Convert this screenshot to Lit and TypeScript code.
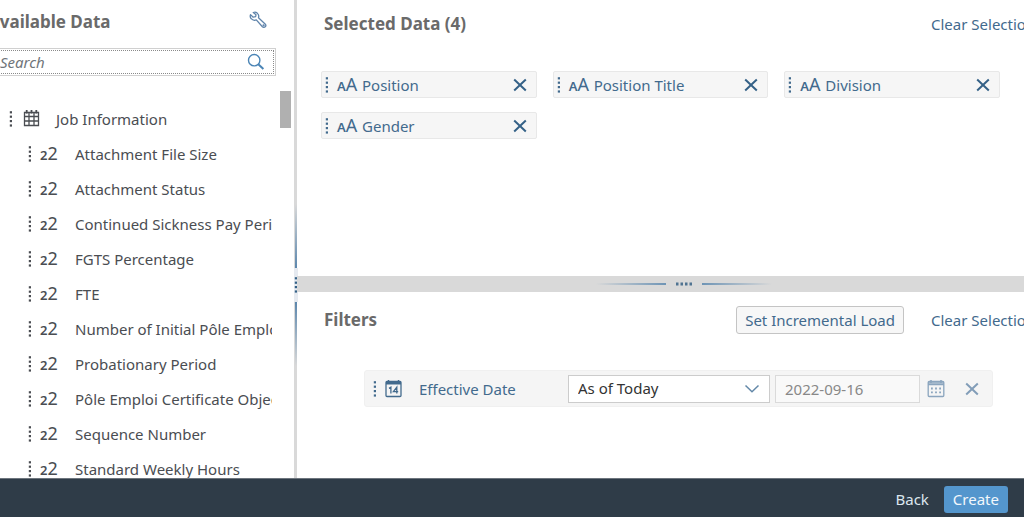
import { LitElement, html, css, svg } from "lit";
import { customElement, state } from "lit/decorators.js";

const FIELDS = [
  "Attachment File Size",
  "Attachment Status",
  "Continued Sickness Pay Period",
  "FGTS Percentage",
  "FTE",
  "Number of Initial Pôle Emploi",
  "Probationary Period",
  "Pôle Emploi Certificate Object",
  "Sequence Number",
  "Standard Weekly Hours",
];

const grip = html`<svg class="grip" width="4" height="16" viewBox="0 0 4 16" aria-hidden="true">
  ${[0, 4.4, 8.8, 13.2].map((y) => svg`<rect x="0.8" y=${y + 0.2} width="2.2" height="2.2" fill="currentColor" />`)}
</svg>`;

const cross = html`<svg width="14" height="14" viewBox="0 0 14 14" aria-hidden="true">
  <path d="M1.2 1.5 12.8 12.5M12.8 1.5 1.2 12.5" fill="none" stroke="currentColor" stroke-width="2" />
</svg>`;

const numberIcon = html`<span class="kind number" aria-hidden="true"><small>2</small>2</span>`;
const textIcon = html`<span class="kind letters" aria-hidden="true"><small>A</small>A</span>`;

@customElement("app-root")
export class AppRoot extends LitElement {
  @state() private selected = ["Position", "Position Title", "Division", "Gender"];

  static styles = css`
    :host {
      display: flex;
      flex-direction: column;
      height: 100vh;
      overflow: hidden;
      background: #fff;
      color: #4a4d52;
      font: 15px/20px "Noto Sans", sans-serif;
    }
    * { box-sizing: border-box; }
    svg { display: block; flex: none; }
    h2 { margin: 0; font-size: 17px; line-height: 24px; font-weight: 700; color: #6a6a6a; white-space: nowrap; }
    button, input, select { font: inherit; color: inherit; margin: 0; }
    button { padding: 0; border: 0; background: none; cursor: pointer; }
    a { color: #426a8d; text-decoration: none; white-space: nowrap; }
    .work { flex: 1; min-height: 0; display: grid; grid-template-columns: 294px 3px minmax(0, 1fr); }

    .available { display: flex; flex-direction: column; min-height: 0; overflow: hidden; padding-right: 3px; }
    .available-head { display: flex; justify-content: space-between; align-items: center; height: 44px; margin-left: -12px; padding-right: 24px; }
    .tool { color: #5f84ab; margin-top: -4px; }
    .search { display: flex; align-items: center; height: 28px; margin: 4px 15px 0 -4px; padding: 0 10px 0 3px; border: 1px solid #d0d0d0; outline: 1px dotted #8a8a8a; outline-offset: -3px; }
    .search input { flex: 1; min-width: 0; border: 0; outline: 0; padding: 0; background: none; }
    .search input::placeholder { color: #70757a; font-style: italic; opacity: 1; }
    .search button { color: #4a84b5; }
    .tree { display: flex; justify-content: space-between; flex: 1; min-height: 0; margin-top: 15px; }
    .list { flex: 1; min-width: 0; margin: 0 8px 0 0; padding: 10px 0 0; list-style: none; overflow: hidden; }
    .list li { display: flex; align-items: center; height: 35px; white-space: nowrap; }
    .folder { padding-left: 9px; }
    .folder svg + svg { margin: 0 16px 0 10px; }
    .field { padding-left: 28px; }
    .kind { flex: none; font-size: 18px; line-height: 20px; white-space: nowrap; }
    .kind small { font-size: 13px; font-weight: 600; }
    .number { width: 19px; margin: 0 16px 0 8px; }
    .letters { width: 21px; margin: 0 4px 0 8px; }
    .thumb { flex: none; width: 11px; height: 37px; background: #b0b0b0; }

    .divider { display: flex; flex-direction: column; align-items: center; background: #d9d9d9; padding-top: 204px; }
    .divider i { width: 2px; height: 64px; background: linear-gradient(#d9d9d9, #5c87ad); }
    .divider i:last-child { background: linear-gradient(#5c87ad, #d9d9d9); }
    .divider span { display: flex; align-items: center; height: 34px; color: #346187; background: #e6eaf0; }

    .main { display: flex; flex-direction: column; min-width: 0; overflow: hidden; }
    .head { display: flex; align-items: center; padding-left: 27px; }
    .head h2 { flex: 1; }
    .clear { width: 93px; margin-left: 27px; overflow: visible; }
    .selected { height: 276px; padding-top: 12px; }
    .chips { display: grid; grid-template-columns: repeat(3, minmax(0, 1fr)); gap: 14px 16px; margin: 35px 24px 0; padding: 0; list-style: none; }
    .chip { display: flex; align-items: center; height: 27px; padding: 0 9px 0 3px; border: 1px solid #e8e8e8; border-radius: 2px; background: #f6f6f6; color: #426a8d; }
    .chip .label { flex: 1; }
    .chip button { color: #346187; }
    .bar { display: flex; flex: none; justify-content: center; align-items: center; gap: 9px; height: 16px; padding-left: 46px; background: #d9d9d9; color: #4f7391; }
    .bar i { width: 70px; height: 2px; background: linear-gradient(90deg, #d9d9d9, #6e94b5); }
    .bar i:last-child { background: linear-gradient(90deg, #6e94b5, #d9d9d9); }
    .bar svg { margin: 0 1px; }
    .filters { padding-top: 14px; }
    .load { height: 28px; padding: 0 8px; border: 1px solid #c4c4c4; border-radius: 3px; background: #f7f7f7; color: #426a8d; }
    .filter { display: flex; align-items: center; height: 37px; margin: 36px 31px 0 67px; padding: 0 13px 0 8px; border: 1px solid #f0f0f0; border-radius: 3px; background: #f5f5f5; color: #426a8d; }
    .filter svg + svg { margin: 0 17px 0 8px; }
    .filter label { flex: 1; white-space: nowrap; }
    .pick { display: grid; align-items: center; flex: 0 1 202px; margin-right: 5px; }
    .pick select, .pick svg { grid-area: 1 / 1; }
    .pick select { width: 100%; height: 28px; padding: 0 30px 2px 9px; appearance: none; border: 1px solid #ccc; border-radius: 0; background: #fff; color: #333; }
    .filter .pick svg { justify-self: end; margin: 0 10px 0 0; pointer-events: none; }
    .date { flex: 0 1 145px; min-width: 0; width: 145px; height: 28px; padding: 0 9px; border: 1px solid #dadada; background: #f9f9f9; color: #888; -webkit-text-fill-color: #888; }
    .cal { margin: 0 20px 0 7px; color: #8ba5be; }
    .drop { color: #829db8; }

    .footer { flex: none; display: flex; justify-content: flex-end; align-items: center; gap: 15px; height: 39px; padding: 2px 16px 0 0; background: #2f3c48; border-top: 1px solid #6d757d; color: #dce6ee; }
    .create { height: 27px; padding: 0 9px; border-radius: 3px; background: #5496cd; color: #f2f8fc; }
  `;

  private remove(name: string) {
    this.selected = this.selected.filter((item) => item !== name);
  }

  render() {
    return html`
      <div class="work">
        <aside class="available">
          <div class="available-head">
            <h2>Available Data</h2>
            <button class="tool" aria-label="Settings">
              <svg width="18" height="18" viewBox="0 0 18 18" fill="none" stroke="currentColor" stroke-width="1.3" stroke-linejoin="round">
                <path d="M4.3 1.5C6 .9 8 1.4 9 3C9.8 4.2 9.9 5.6 9.5 6.8L16.1 12.9C17 13.8 17 15 16.2 15.8C15.4 16.6 14.2 16.5 13.4 15.7L7.3 8.9C5.5 9.6 3.4 9.1 2.2 7.7C1.2 6.6 1 5 1.5 3.6L4.2 6.2L6.6 5.7L7 3.8Z" />
                <circle cx="14.6" cy="14.3" r=".5" />
              </svg>
            </button>
          </div>
          <div class="search">
            <input type="text" placeholder="Search" aria-label="Search" />
            <button aria-label="Run search">
              <svg width="18" height="18" viewBox="0 0 18 18" fill="none" stroke="currentColor">
                <circle cx="7.2" cy="7.2" r="5.7" stroke-width="1.4" />
                <path d="M11.3 11.3 16.4 16" stroke-width="2" />
              </svg>
            </button>
          </div>
          <div class="tree">
            <ul class="list">
              <li class="folder">
                ${grip}
                <svg width="17" height="18" viewBox="0 0 17 18" fill="none" stroke="currentColor" stroke-width="1.3">
                  <path d="M1.5 2.5H15.5V15.5H1.5ZM1.5 6.5H15.5M1.5 11H15.5M6 2.5V15.5M11 2.5V15.5" />
                  <path d="M3.7 0V3.5M8.5 0V3.5M13.3 0V3.5" stroke-width="1.8" />
                </svg>
                <span>Job Information</span>
              </li>
              ${FIELDS.map((name) => html`<li class="field">${grip}${numberIcon}<span>${name}</span></li>`)}
            </ul>
            <div class="thumb"></div>
          </div>
        </aside>
        <div class="divider"><i></i><span>${grip}</span><i></i></div>
        <main class="main">
          <section class="selected">
            <div class="head">
              <h2>Selected Data (${this.selected.length})</h2>
              <a class="clear" href="#">Clear Selections</a>
            </div>
            <ul class="chips">
              ${this.selected.map(
                (name) => html`<li class="chip">
                  ${grip}${textIcon}<span class="label">${name}</span>
                  <button aria-label="Remove ${name}" @click=${() => this.remove(name)}>${cross}</button>
                </li>`,
              )}
            </ul>
          </section>
          <div class="bar">
            <i></i>
            <svg width="16" height="4" viewBox="0 0 16 4">
              ${[0, 4.5, 9, 13.5].map((x) => svg`<rect x=${x} y="0.5" width="2.5" height="3" fill="currentColor" />`)}
            </svg>
            <i></i>
          </div>
          <section class="filters">
            <div class="head">
              <h2>Filters</h2>
              <button class="load">Set Incremental Load</button>
              <a class="clear" href="#">Clear Selections</a>
            </div>
            <div class="filter">
              ${grip}
              <svg width="17" height="18" viewBox="0 0 17 18" fill="none" stroke="currentColor">
                <rect x="1" y="1.5" width="15" height="15" rx="1" stroke-width="1.3" />
                <path d="M1 3H16" stroke-width="3" />
                <path d="M3.5 0V3M13.5 0V3" stroke-width="1.4" />
                <path d="M4 8.4 5.9 7.2V13.6M11.8 13.6V7.2L8.4 11.6H13.2" stroke-width="1.3" />
              </svg>
              <label for="when">Effective Date</label>
              <div class="pick">
                <select id="when"><option>As of Today</option><option>Custom</option></select>
                <svg width="16" height="10" viewBox="0 0 16 10" fill="none" stroke="#6388a8" stroke-width="1.5"><path d="M1.5 1.5 8 7.8 14.5 1.5" /></svg>
              </div>
              <input class="date" type="text" aria-label="Date" value="2022-09-16" disabled />
              <button class="cal" aria-label="Open calendar">
                <svg width="18" height="18" viewBox="0 0 18 18" fill="none" stroke="currentColor">
                  <rect x="1.2" y="1.5" width="15.6" height="15" rx="1" stroke-width="1.3" />
                  <path d="M1 3H17M1 4.6H17" stroke-width="1.4" />
                  <path d="M4 0V3M14 0V3" stroke-width="1.6" />
                  <path d="M4 8.5H14.5M4 12.3H14.5" stroke-width="1.8" stroke-dasharray="1.8 2.3" />
                </svg>
              </button>
              <button class="drop" aria-label="Remove filter">${cross}</button>
            </div>
          </section>
        </main>
      </div>
      <footer class="footer">
        <button>Back</button>
        <button class="create">Create</button>
      </footer>
    `;
  }
}
